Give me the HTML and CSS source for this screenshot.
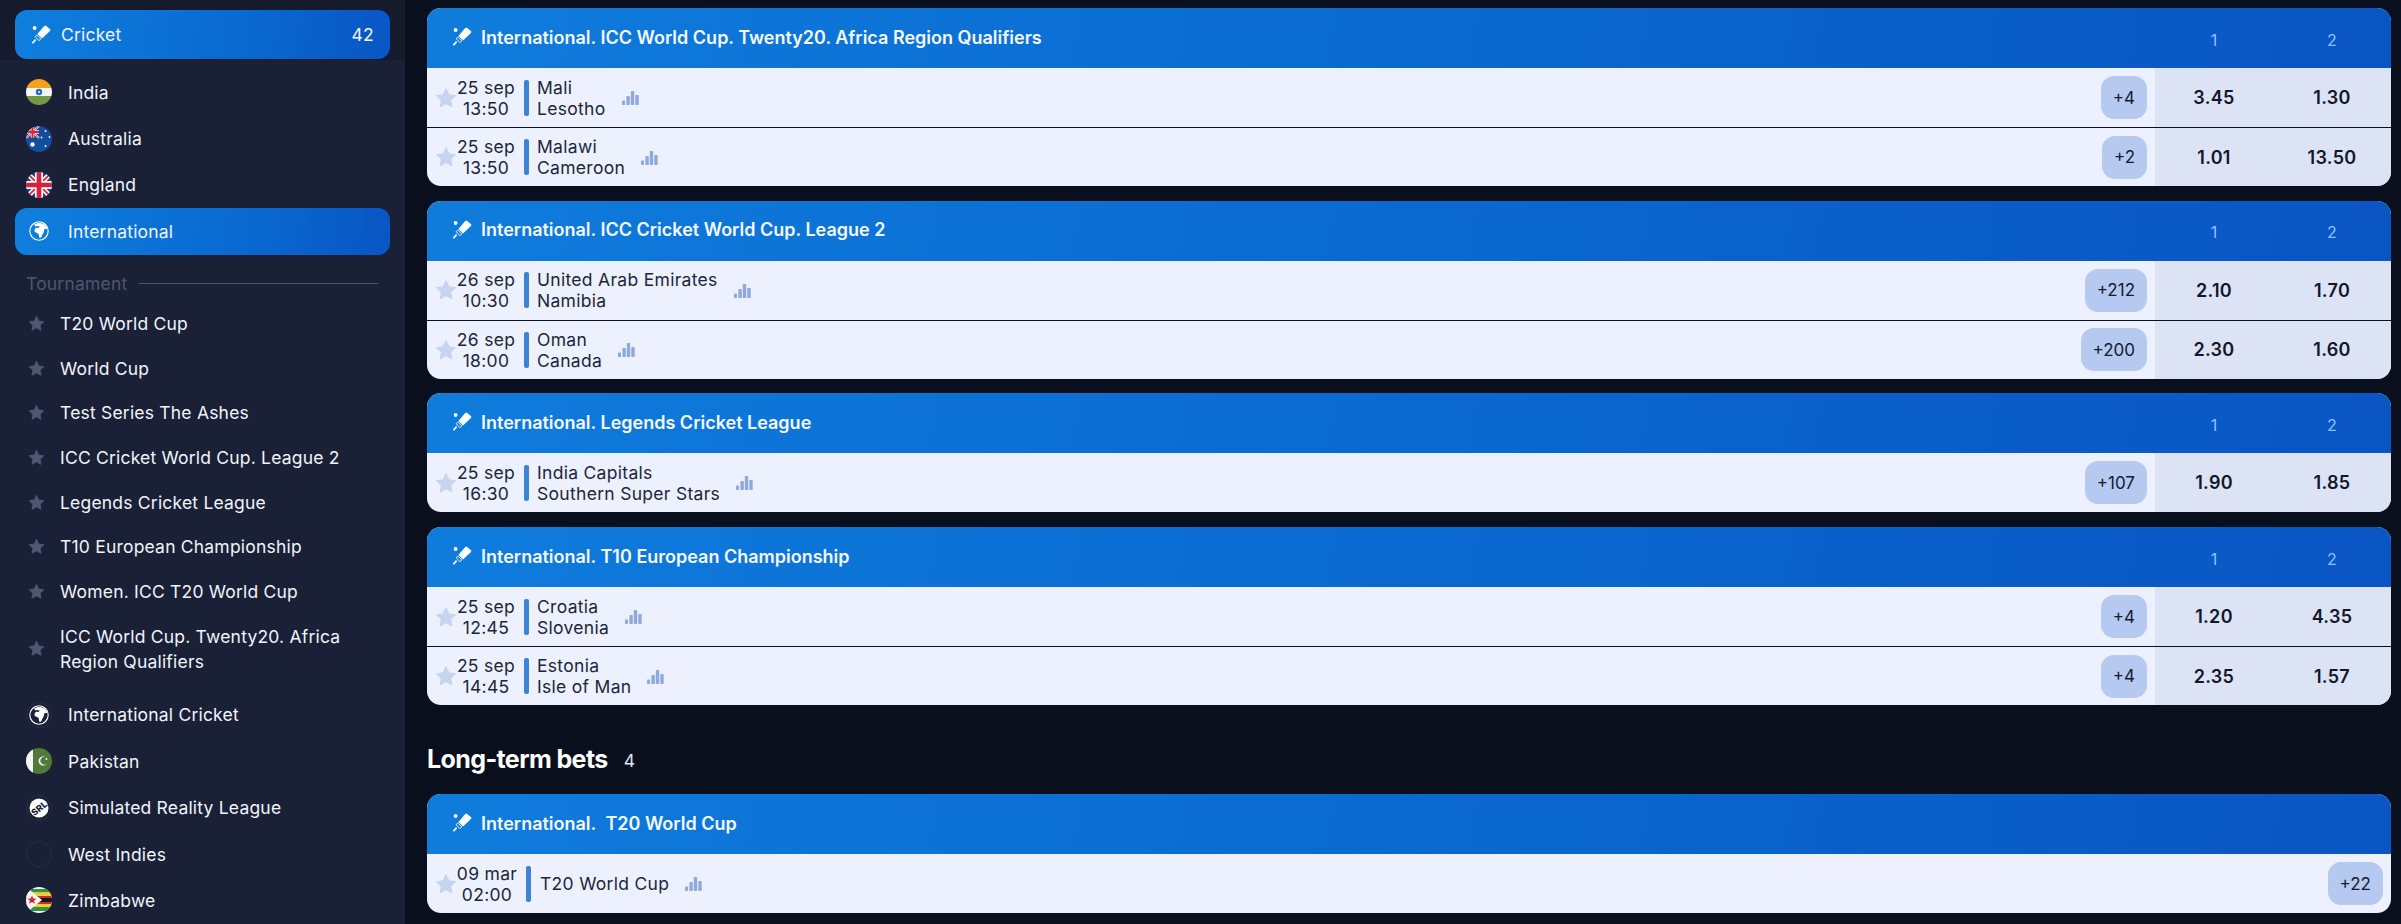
FILE: index.html
```html
<!DOCTYPE html>
<html lang="en">
<head>
<meta charset="utf-8">
<title>Cricket</title>
<link rel="stylesheet" href="styles.css">
</head>
<body>
<svg class="defs" aria-hidden="true">
  <symbol id="bat" viewBox="0 0 20 20"><path d="M14.600.6l4.800 4-.4 1.400-8 7.600-4.600-4.600 6.600-7.800z" fill="#fff"/><path d="M5.800 10l4 4-1.900 1.600-3.800-3.900z" fill="none" stroke="#fff" stroke-width=".9"/><path d="M4.600 14.600l-3.200 3.600" stroke="#fff" stroke-width="1.700" fill="none"/><circle cx="3.600" cy="3" r="1.900" fill="#fff"/></symbol>
  <symbol id="star" viewBox="0 0 20 20"><path d="M10 1.600l2.600 5.500 6 .8-4.400 4.100 1.100 6L10 15.100 4.700 18l1.100-6L1.400 7.900l6-.8z" fill="currentColor" stroke="currentColor" stroke-width="1" stroke-linejoin="round"/></symbol>
  <symbol id="stats" viewBox="0 0 17 14"><rect x="0" y="9.500" width="3" height="4.500" rx=".8"/><rect x="4.400" y="5" width="3.400" height="9" rx=".8"/><rect x="8.800" y="0" width="3.400" height="14" rx=".8"/><rect x="13.300" y="4" width="3.400" height="10" rx=".8"/></symbol>
  <symbol id="globe" viewBox="0 0 20 20"><circle cx="10" cy="10" r="9.200" fill="none" stroke="#fff" stroke-width="1.100"/><path d="M5 3.500C7.500 1.500 12.500 1.200 15.500 3.500 17 4.800 18 6.500 18.300 8L15.500 8 15 10C14.800 12 13.500 13 13 14.500 12.700 16 11.800 17 10.800 17 10 16.500 10 14.500 9.600 13 9 12 7 12 6 11 5 9.500 5.500 8 7 7 8 6.400 9 6.800 10 7L10.500 5.500 8 5 6.500 5.500z" fill="#fff"/></symbol>
  <symbol id="in" viewBox="0 0 26 26"><rect width="26" height="9" fill="#f5a11c"/><rect y="9" width="26" height="8" fill="#f4f5f7"/><rect y="17" width="26" height="9" fill="#729a45"/><circle cx="13" cy="13" r="3.200" fill="#2a6bb8"/><circle cx="13" cy="13" r="1" fill="#f4f5f7"/></symbol>
  <symbol id="au" viewBox="0 0 26 26"><rect width="26" height="26" fill="#124d9e"/><rect width="13" height="13" fill="#1a3f8f"/><path d="M0 0l13 12M13 0L0 12" stroke="#f4f5f7" stroke-width="2"/><path d="M6.500 0v12M0 6h13" stroke="#f4f5f7" stroke-width="3.500"/><path d="M0 0l13 12M13 0L0 12" stroke="#d8213c" stroke-width=".9"/><path d="M6.500 0v12M0 6h13" stroke="#d8213c" stroke-width="2"/><circle cx="6.500" cy="18.500" r="2.200" fill="#f4f5f7"/><circle cx="19.500" cy="5" r="1" fill="#f4f5f7"/><circle cx="19.500" cy="20" r="1" fill="#f4f5f7"/><circle cx="23.500" cy="11" r=".9" fill="#f4f5f7"/><circle cx="15.500" cy="11.500" r=".9" fill="#f4f5f7"/></symbol>
  <symbol id="gb" viewBox="0 0 26 26"><rect width="26" height="26" fill="#25408f"/><path d="M0 0l26 26M26 0L0 26" stroke="#f4f5f7" stroke-width="5"/><path d="M0 0l26 26M26 0L0 26" stroke="#d8213c" stroke-width="1.600"/><path d="M13 0v26M0 13h26" stroke="#f4f5f7" stroke-width="8"/><path d="M13 0v26M0 13h26" stroke="#d8213c" stroke-width="4.600"/></symbol>
  <symbol id="pk" viewBox="0 0 26 26"><rect width="26" height="26" fill="#507a37"/><rect width="7" height="26" fill="#f4f5f7"/><path d="M19.800 9.200a4.600 4.600 0 1 0 1.600 5.600 3.800 3.800 0 1 1-1.600-5.600z" fill="#f4f5f7"/><circle cx="20.500" cy="11" r=".9" fill="#f4f5f7"/></symbol>
  <symbol id="zw" viewBox="0 0 26 26"><rect width="26" height="26" fill="#f4f5f7"/><rect y="2" width="26" height="3.500" fill="#2f9340"/><rect y="5.500" width="26" height="3.500" fill="#f5c932"/><rect y="9" width="26" height="8" fill="#c92a2a"/><rect y="11" width="26" height="4" fill="#17171c"/><rect y="17" width="26" height="3" fill="#f5c932"/><rect y="20" width="26" height="4" fill="#2f9340"/><path d="M0 0l16 13L0 26z" fill="#f4f5f7"/><path d="M6 8.500l1.300 3 3.200.2-2.500 2 .9 3.100L6 15l-2.900 1.800.9-3.100-2.500-2 3.200-.2z" fill="#c92a2a"/></symbol>
</svg>

<div class="app">
  <aside class="sidebar">
    <div class="sport-wrap">
      <div class="sport">
        <svg class="bat-icon"><use href="#bat"/></svg>
        <span class="sport-name">Cricket</span>
        <span class="sport-count">42</span>
      </div>
    </div>
    <nav class="nav">
      <a class="country"><svg class="flag"><use href="#in"/></svg><span>India</span></a>
      <a class="country"><svg class="flag"><use href="#au"/></svg><span>Australia</span></a>
      <a class="country"><svg class="flag"><use href="#gb"/></svg><span>England</span></a>
      <a class="country active"><span class="ring"><svg class="globe"><use href="#globe"/></svg></span><span>International</span></a>

      <div class="tour-head"><span>Tournament</span><i class="tour-line"></i></div>
      <a class="tour"><svg class="tour-star"><use href="#star"/></svg><span>T20 World Cup</span></a>
      <a class="tour"><svg class="tour-star"><use href="#star"/></svg><span>World Cup</span></a>
      <a class="tour"><svg class="tour-star"><use href="#star"/></svg><span>Test Series The Ashes</span></a>
      <a class="tour"><svg class="tour-star"><use href="#star"/></svg><span>ICC Cricket World Cup. League 2</span></a>
      <a class="tour"><svg class="tour-star"><use href="#star"/></svg><span>Legends Cricket League</span></a>
      <a class="tour"><svg class="tour-star"><use href="#star"/></svg><span>T10 European Championship</span></a>
      <a class="tour"><svg class="tour-star"><use href="#star"/></svg><span>Women. ICC T20 World Cup</span></a>
      <a class="tour tall"><svg class="tour-star"><use href="#star"/></svg><span>ICC World Cup. Twenty20. Africa Region Qualifiers</span></a>

      <a class="country"><span class="ring bordered"><svg class="globe"><use href="#globe"/></svg></span><span>International Cricket</span></a>
      <a class="country"><svg class="flag"><use href="#pk"/></svg><span>Pakistan</span></a>
      <a class="country"><span class="ring bordered"><svg class="srl" viewBox="0 0 20 20"><circle cx="10" cy="10" r="9.500" fill="#fff"/><text x="10" y="13.500" class="srl-text" transform="rotate(-40 10 10)">SRL</text></svg></span><span>Simulated Reality League</span></a>
      <a class="country"><span class="ring bordered"></span><span>West Indies</span></a>
      <a class="country"><svg class="flag"><use href="#zw"/></svg><span>Zimbabwe</span></a>
    </nav>
  </aside>

  <main class="main">
    <section class="card">
      <header class="card-head"><svg class="head-icon"><use href="#bat"/></svg><h3>International. ICC World Cup. Twenty20. Africa Region Qualifiers</h3><div class="cols"><span>1</span><span>2</span></div></header>
      <div class="row"><svg class="star"><use href="#star"/></svg><div class="date">25 sep<br>13:50</div><i class="bar"></i><div class="teams">Mali<br>Lesotho</div><svg class="stats"><use href="#stats"/></svg><b class="more">+4</b><div class="odds"><span>3.45</span><span>1.30</span></div></div>
      <div class="row"><svg class="star"><use href="#star"/></svg><div class="date">25 sep<br>13:50</div><i class="bar"></i><div class="teams">Malawi<br>Cameroon</div><svg class="stats"><use href="#stats"/></svg><b class="more">+2</b><div class="odds"><span>1.01</span><span>13.50</span></div></div>
    </section>
    <section class="card">
      <header class="card-head"><svg class="head-icon"><use href="#bat"/></svg><h3>International. ICC Cricket World Cup. League 2</h3><div class="cols"><span>1</span><span>2</span></div></header>
      <div class="row"><svg class="star"><use href="#star"/></svg><div class="date">26 sep<br>10:30</div><i class="bar"></i><div class="teams">United Arab Emirates<br>Namibia</div><svg class="stats"><use href="#stats"/></svg><b class="more">+212</b><div class="odds"><span>2.10</span><span>1.70</span></div></div>
      <div class="row"><svg class="star"><use href="#star"/></svg><div class="date">26 sep<br>18:00</div><i class="bar"></i><div class="teams">Oman<br>Canada</div><svg class="stats"><use href="#stats"/></svg><b class="more">+200</b><div class="odds"><span>2.30</span><span>1.60</span></div></div>
    </section>
    <section class="card">
      <header class="card-head"><svg class="head-icon"><use href="#bat"/></svg><h3>International. Legends Cricket League</h3><div class="cols"><span>1</span><span>2</span></div></header>
      <div class="row"><svg class="star"><use href="#star"/></svg><div class="date">25 sep<br>16:30</div><i class="bar"></i><div class="teams">India Capitals<br>Southern Super Stars</div><svg class="stats"><use href="#stats"/></svg><b class="more">+107</b><div class="odds"><span>1.90</span><span>1.85</span></div></div>
    </section>
    <section class="card">
      <header class="card-head"><svg class="head-icon"><use href="#bat"/></svg><h3>International. T10 European Championship</h3><div class="cols"><span>1</span><span>2</span></div></header>
      <div class="row"><svg class="star"><use href="#star"/></svg><div class="date">25 sep<br>12:45</div><i class="bar"></i><div class="teams">Croatia<br>Slovenia</div><svg class="stats"><use href="#stats"/></svg><b class="more">+4</b><div class="odds"><span>1.20</span><span>4.35</span></div></div>
      <div class="row"><svg class="star"><use href="#star"/></svg><div class="date">25 sep<br>14:45</div><i class="bar"></i><div class="teams">Estonia<br>Isle of Man</div><svg class="stats"><use href="#stats"/></svg><b class="more">+4</b><div class="odds"><span>2.35</span><span>1.57</span></div></div>
    </section>

    <div class="section-title"><h2>Long-term bets</h2><span>4</span></div>

    <section class="card">
      <header class="card-head"><svg class="head-icon"><use href="#bat"/></svg><h3>International.&nbsp; T20 World Cup</h3></header>
      <div class="row long"><svg class="star"><use href="#star"/></svg><div class="date">09 mar<br>02:00</div><i class="bar"></i><div class="teams">T20 World Cup</div><svg class="stats"><use href="#stats"/></svg><b class="more">+22</b></div>
    </section>
  </main>
</div>
</body>
</html>
```

FILE: styles.css
```css
* { box-sizing: border-box; }
html, body { margin: 0; height: 100%; overflow: hidden; }
body {
  background: #090f1c;
  font-family: Inter, "Liberation Sans", sans-serif;
  color: #f1f4fb;
}
.defs { width: 0; height: 0; display: block; overflow: hidden; }
.app { display: flex; height: 924px; overflow: hidden; }

/* Sidebar */
.sidebar { width: 405px; flex: none; background: #1a2036; height: 924px; overflow: hidden; font-size: 17.5px; letter-spacing: 0.2px; }
.sport-wrap { height: 60px; padding: 10px 15px 0; background: #151a2c; }
.sport {
  height: 49px;
  padding: 0 16px 0 16px;
  display: flex;
  align-items: center;
  border-radius: 12px;
  background: linear-gradient(100deg, #0f7fdd 0%, #0a6bd3 55%, #0856c4 100%);
}
.bat-icon { width: 20px; height: 20px; margin-right: 10px; flex: none; }
.sport-name { flex: 1; }
.nav { padding: 9px 15px 0; }
.country {
  height: 46.4px;
  padding-left: 11px;
  display: flex;
  align-items: center;
  gap: 16px;
  border-radius: 12px;
}
.country.active { background: linear-gradient(100deg, #0f7fdd 0%, #0a6bd3 55%, #0856c4 100%); }
.flag { width: 26px; height: 26px; border-radius: 50%; flex: none; }
.ring {
  width: 26px; height: 26px;
  flex: none;
  border-radius: 50%;
  display: flex;
  align-items: center;
  justify-content: center;
}
.ring.bordered { border: 1px solid #262d45; }
.globe { width: 20px; height: 20px; }
.srl { width: 20px; height: 20px; }
.srl-text { font: 800 9px Inter, "Liberation Sans", sans-serif; text-anchor: middle; fill: #1a2036; }

.tour-head {
  margin-top: 13.5px;
  margin-bottom: 2px;
  height: 31px;
  padding: 0 12px 0 11px;
  display: flex;
  align-items: center;
  gap: 12px;
  color: #4e5670;
}
.tour-line { flex: 1; height: 1px; background: #4e5670; }
.tour {
  min-height: 44.67px;
  padding-left: 13px;
  display: flex;
  align-items: center;
  gap: 15px;
  line-height: 25px;
  padding-right: 20px;
}
.tour.tall { height: 70px; margin-bottom: 8px; }
.tour-star { width: 17px; height: 17px; flex: none; color: #4f5873; }

/* Main */
.main { flex: 1; min-width: 0; padding: 8px 10px 0 22px; }
.card { border-radius: 14px; overflow: hidden; margin-bottom: 14.7px; background: #ecf1fd; }
.card-head {
  height: 60px;
  padding-left: 25px;
  display: flex;
  align-items: center;
  background: linear-gradient(100deg, #0f7cdc 0%, #0a6bd2 45%, #0955c4 100%);
}
.head-icon { width: 20px; height: 20px; flex: none; margin-right: 9px; margin-bottom: 2px; }
.card-head h3 { flex: 1; margin: 0 0 2px; font-size: 18px; font-weight: 600; color: #f5f8ff; }
.cols { width: 236px; flex: none; display: flex; }
.cols span { flex: 1; text-align: center; font-size: 16px; color: #8cc4ff; margin-top: 3px; }

.row {
  height: 59px;
  padding-left: 10px;
  display: flex;
  align-items: center;
  color: #20263a;
  font-size: 17.5px;
  letter-spacing: 0.3px;
}
.row + .row { border-top: 1px solid #0c1020; }
.star { width: 22px; height: 22px; flex: none; color: #c6d4f0; margin-left: -2px; margin-right: -1px; }
.date { width: 60px; flex: none; text-align: center; line-height: 21px; margin-right: 8px; }
.bar { width: 4.500px; height: 36px; flex: none; border-radius: 2px; background: #3c84d3; margin-right: 8.500px; }
.teams { line-height: 21px; }
.stats { width: 17px; height: 14px; flex: none; margin-left: 16px; fill: #8fa8de; margin-top: 1px; }
.more {
  margin-left: auto;
  margin-right: 8px;
  height: 43px;
  padding: 0 12px;
  display: flex;
  align-items: center;
  border-radius: 13px;
  background: #b6c9f0;
  color: #141a30;
  font-size: 17px;
  font-weight: 400;
  letter-spacing: 0;
}
.odds {
  width: 236px;
  height: 100%;
  flex: none;
  display: flex;
  align-items: center;
  background: #dce3f4;
}
.odds span { flex: 1; text-align: center; font-size: 18px; font-weight: 600; color: #12172a; }
.row.long .date { width: 62px; }
.row.long .bar { width: 5px; margin-right: 9px; }

.section-title { height: 60px; margin-top: 24px; margin-bottom: 5px; display: flex; align-items: center; gap: 16px; }
.section-title h2 { margin: 0; font-size: 25px; font-weight: 700; letter-spacing: -0.6px; color: #fff; }
.section-title span { font-size: 17.5px; color: #dfe4f0; margin-top: 3px; }
```
